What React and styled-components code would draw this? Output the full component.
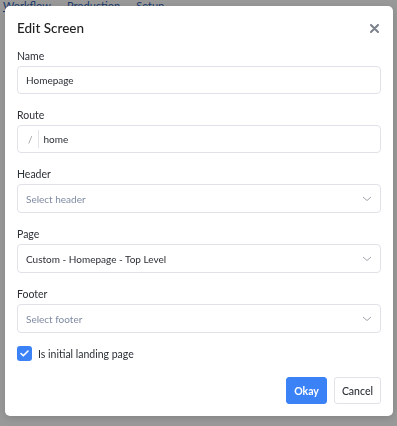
import React from "react";
import styled, { createGlobalStyle } from "styled-components";

const Global = createGlobalStyle`
  html, body { margin: 0; padding: 0; }
  body {
    font-family: Lato, "Noto Sans", Arial, sans-serif;
    background: #fff;
    width: 397px;
    height: 426px;
    overflow: hidden;
  }
  * { box-sizing: border-box; }
`;

const Page = styled.div`
  width: 397px;
  height: 426px;
  padding: 0 3px;
  color: #2f5fb3;
  font-size: 11px;
  line-height: 11px;
`;

const Breadcrumb = styled.div`
  display: flex;
  gap: 6px;
  text-decoration: underline;
`;

const Overlay = styled.div`
  position: fixed;
  inset: 0;
  background: rgba(0, 0, 0, 0.4);
  padding: 6px 4px 10px 5px;
  display: flex;
  align-items: flex-start;
`;

const Modal = styled.div`
  width: 388px;
  height: 410px;
  background: #fff;
  border-radius: 5px;
  padding: 12px 12px 12px 12px;
  display: flex;
  flex-direction: column;
  color: #2b2f36;
  box-shadow: 0 2px 8px rgba(0, 0, 0, 0.15);
`;

const Header = styled.div`
  display: flex;
  align-items: center;
  justify-content: space-between;
  height: 20px;
  margin-bottom: 10px;
`;

const Title = styled.h2`
  margin: 0;
  font-size: 13.5px;
  font-weight: 500;
  line-height: 20px;
  color: #222;
`;

const Close = styled.button`
  border: 0;
  background: none;
  padding: 0;
  margin-right: 1px;
  width: 12px;
  height: 12px;
  display: flex;
  align-items: center;
  justify-content: center;
  cursor: pointer;
`;

const Field = styled.div`
  display: flex;
  flex-direction: column;
  margin-bottom: 13px;
`;

const Label = styled.label`
  font-size: 10.5px;
  line-height: 16px;
  color: #2b2f36;
  margin-bottom: 2px;
`;

const Box = styled.div`
  height: ${(p) => (p.$tall ? 29 : 28)}px;
  border: 1px solid #e1e1ea;
  border-radius: 4px;
  display: flex;
  align-items: center;
  padding: 0 8px;
  font-size: 10px;
  color: ${(p) => (p.$placeholder ? "#7f8ba3" : "#2b2f36")};
`;

const Prefix = styled.span`
  color: #9a9a9a;
  padding: 0 5px 0 2px;
  border-right: 1px solid #e1e1ea;
  height: 18px;
  display: flex;
  align-items: center;
  margin-right: 5px;
`;

const Grow = styled.span`
  flex: 1;
`;

const CheckRow = styled.div`
  display: flex;
  align-items: center;
  gap: 6px;
  font-size: 10.5px;
  color: #2b2f36;
`;

const CheckBox = styled.span`
  width: 15px;
  height: 15px;
  border-radius: 3px;
  background: #3b82f6;
  display: flex;
  align-items: center;
  justify-content: center;
`;

const Footer = styled.div`
  margin-top: auto;
  display: flex;
  justify-content: flex-end;
  gap: 7px;
`;

const Button = styled.button`
  height: 27px;
  padding: 0 7px;
  min-width: ${(p) => (p.$primary ? 40 : 46)}px;
  border-radius: 3px;
  font-family: inherit;
  font-size: 10.5px;
  font-weight: ${(p) => (p.$primary ? 700 : 500)};
  border: 1px solid ${(p) => (p.$primary ? "#3b82f6" : "#e1e1ea")};
  background: ${(p) => (p.$primary ? "#3b82f6" : "#fff")};
  color: ${(p) => (p.$primary ? "#fff" : "#2b2f36")};
`;

const Chevron = () => (
  <svg width="10" height="6" viewBox="0 0 10 6">
    <path d="M1 1l4 3.5L9 1" fill="none" stroke="#a0a4ac" strokeWidth="1" />
  </svg>
);

function SelectField({ label, value, placeholder }) {
  return (
    <Field>
      <Label>{label}</Label>
      <Box $tall $placeholder={!value}>
        <Grow>{value || placeholder}</Grow>
        <Chevron />
      </Box>
    </Field>
  );
}

export default function App() {
  return (
    <>
      <Global />
      <Page>
        <Breadcrumb>
          <span>Workflow</span>
          <span>-</span>
          <span>Production</span>
          <span>-</span>
          <span>Setup</span>
        </Breadcrumb>
      </Page>
      <Overlay>
        <Modal>
          <Header>
            <Title>Edit Screen</Title>
            <Close aria-label="Close">
              <svg width="9" height="9" viewBox="0 0 9 9">
                <path d="M1 1l7 7M8 1L1 8" stroke="#7b818b" strokeWidth="2" strokeLinecap="round" />
              </svg>
            </Close>
          </Header>
          <Field>
            <Label>Name</Label>
            <Box>Homepage</Box>
          </Field>
          <Field>
            <Label>Route</Label>
            <Box>
              <Prefix>/</Prefix>
              home
            </Box>
          </Field>
          <SelectField label="Header" placeholder="Select header" />
          <SelectField label="Page" value="Custom - Homepage - Top Level" />
          <SelectField label="Footer" placeholder="Select footer" />
          <CheckRow>
            <CheckBox>
              <svg width="9" height="7" viewBox="0 0 9 7">
                <path d="M1 3.5l2.3 2.3L8 1" fill="none" stroke="#fff" strokeWidth="1.6" strokeLinecap="round" strokeLinejoin="round" />
              </svg>
            </CheckBox>
            Is initial landing page
          </CheckRow>
          <Footer>
            <Button $primary>Okay</Button>
            <Button>Cancel</Button>
          </Footer>
        </Modal>
      </Overlay>
    </>
  );
}
